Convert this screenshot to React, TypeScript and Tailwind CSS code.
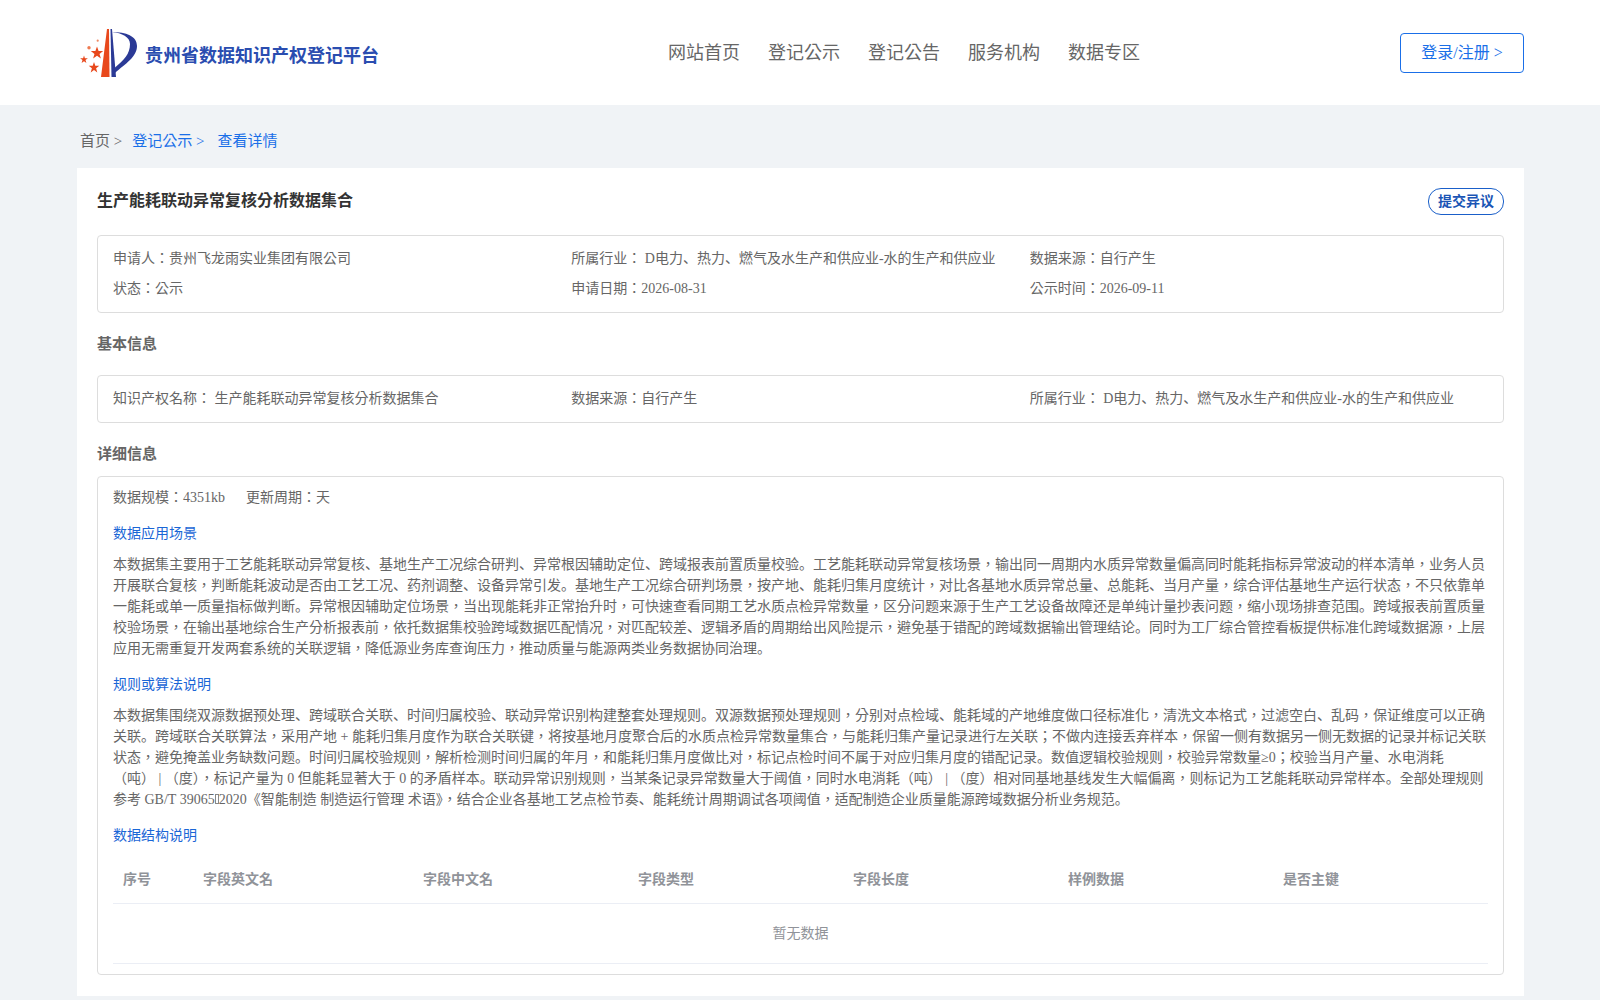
const navItems = ["网站首页", "登记公示", "登记公告", "服务机构", "数据专区"];

const summary = [
  "申请人：贵州飞龙雨实业集团有限公司",
  "所属行业： D电力、热力、燃气及水生产和供应业-水的生产和供应业",
  "数据来源：自行产生",
  "状态：公示",
  "申请日期：2026-08-31",
  "公示时间：2026-09-11",
];

const basicInfo = [
  "知识产权名称： 生产能耗联动异常复核分析数据集合",
  "数据来源：自行产生",
  "所属行业： D电力、热力、燃气及水生产和供应业-水的生产和供应业",
];

const columns = ["序号", "字段英文名", "字段中文名", "字段类型", "字段长度", "样例数据", "是否主键"];

const scene =
  "本数据集主要用于工艺能耗联动异常复核、基地生产工况综合研判、异常根因辅助定位、跨域报表前置质量校验。工艺能耗联动异常复核场景，输出同一周期内水质异常数量偏高同时能耗指标异常波动的样本清单，业务人员开展联合复核，判断能耗波动是否由工艺工况、药剂调整、设备异常引发。基地生产工况综合研判场景，按产地、能耗归集月度统计，对比各基地水质异常总量、总能耗、当月产量，综合评估基地生产运行状态，不只依靠单一能耗或单一质量指标做判断。异常根因辅助定位场景，当出现能耗非正常抬升时，可快速查看同期工艺水质点检异常数量，区分问题来源于生产工艺设备故障还是单纯计量抄表问题，缩小现场排查范围。跨域报表前置质量校验场景，在输出基地综合生产分析报表前，依托数据集校验跨域数据匹配情况，对匹配较差、逻辑矛盾的周期给出风险提示，避免基于错配的跨域数据输出管理结论。同时为工厂综合管控看板提供标准化跨域数据源，上层应用无需重复开发两套系统的关联逻辑，降低源业务库查询压力，推动质量与能源两类业务数据协同治理。";

const rulesHead =
  "本数据集围绕双源数据预处理、跨域联合关联、时间归属校验、联动异常识别构建整套处理规则。双源数据预处理规则，分别对点检域、能耗域的产地维度做口径标准化，清洗文本格式，过滤空白、乱码，保证维度可以正确关联。跨域联合关联算法，采用产地 + 能耗归集月度作为联合关联键，将按基地月度聚合后的水质点检异常数量集合，与能耗归集产量记录进行左关联；不做内连接丢弃样本，保留一侧有数据另一侧无数据的记录并标记关联状态，避免掩盖业务缺数问题。时间归属校验规则，解析检测时间归属的年月，和能耗归集月度做比对，标记点检时间不属于对应归集月度的错配记录。数值逻辑校验规则，校验异常数量≥0；校验当月产量、水电消耗（吨）\u00A0|\u00A0（度），标记产量为 0 但能耗显著大于 0 的矛盾样本。联动异常识别规则，当某条记录异常数量大于阈值，同时水电消耗（吨）\u00A0|\u00A0（度）相对同基地基线发生大幅偏离，则标记为工艺能耗联动异常样本。全部处理规则参考 GB/T 39065";

const rulesTail =
  "2020《智能制造 制造运行管理 术语》，结合企业各基地工艺点检节奏、能耗统计周期调试各项阈值，适配制造企业质量能源跨域数据分析业务规范。";

// 、。 sit in the lower left of the cell in the reference, the rest of the punctuation is centred
const Punct = ({ text }: { text: string }) => (
  <>
    {text.split(/([、。])/).map((part, i) =>
      i % 2 === 1 ? (
        <span key={i} className="font-['Liberation_Serif','Noto_Sans_CJK_SC',serif]">
          {part}
        </span>
      ) : (
        part
      ),
    )}
  </>
);

const Logo = () => (
  <svg width="60" height="54" viewBox="0 0 60 54" className="shrink-0">
    <polygon points="27,3 29,3 29.5,51 21,51" fill="#e8481c" />
    <polygon points="30.5,3 32,3 36,51 31.5,51" fill="#2b3a96" />
    <path d="M32 6C46 6 57 10 57 20C57 31 45 38 35 47L34.5 42C44 34 50 28 50 18C50 11 42 7 32 6Z" fill="#2b3a96" />
    <polygon
      points="17,20.5 18.6,25 23.2,25 19.5,27.9 20.9,32.6 17,29.8 13.1,32.6 14.5,27.9 10.8,25 15.4,25"
      fill="#e8481c"
    />
    <polygon
      points="14,36 15.3,39.8 19.3,39.8 16.1,42.3 17.3,46.4 14,43.9 10.7,46.4 11.9,42.3 8.7,39.8 12.7,39.8"
      fill="#e8481c"
    />
    <polygon
      points="4,29.5 4.9,32.3 7.9,32.3 5.5,34.1 6.4,37 4,35.2 1.6,37 2.5,34.1 0.1,32.3 3.1,32.3"
      fill="#e8481c"
    />
    <circle cx="9" cy="21.7" r="1.7" fill="#ee7a50" />
    <circle cx="17.7" cy="14.7" r="1.1" fill="#ee8a66" />
  </svg>
);

const SectionTitle = ({ children }: { children: string }) => (
  <h3 className="mt-[15px] text-sm leading-[21px] text-[#1a66d6]">{children}</h3>
);

const App = () => {
  return (
    <div className="min-h-screen bg-[#f0f3f6] font-['Liberation_Serif','Noto_Sans_CJK_TC',serif] text-sm text-[#666]">
      <header className="flex h-[105px] items-center bg-white pl-[80px] pr-[76px]">
        <div className="flex items-center gap-[5px]">
          <Logo />
          <span className="mt-[6px] text-lg font-bold text-[#2a4db0]">贵州省数据知识产权登记平台</span>
        </div>
        <nav className="ml-[289px] flex gap-[28px] text-lg text-[#666]">
          {navItems.map((item) => (
            <a key={item}>{item}</a>
          ))}
        </nav>
        <button className="ml-auto h-10 w-[124px] rounded border border-[#1a6fe8] pt-px text-base text-[#1a6fe8]">
          登录/注册 &gt;
        </button>
      </header>

      <div className="flex h-[63px] items-center pl-[80px] pt-[11px] text-[15px]">
        <span className="mr-[10px]">首页 &gt;</span>
        <span className="mr-[13px] text-[#1a6fe8]">登记公示 &gt;</span>
        <span className="text-[#1a6fe8]">查看详情</span>
      </div>

      <main className="ml-[77px] w-[1447px] bg-white px-5 pb-[21px] pt-5">
        <div className="flex h-[27px] items-start justify-between">
          <h1 className="text-base font-bold leading-[26px] text-[#333]">生产能耗联动异常复核分析数据集合</h1>
          <button className="h-[27px] w-[76px] rounded-[13px] border border-[#1a5fc9] text-sm font-bold text-[#1a55b5]">
            提交异议
          </button>
        </div>

        <div className="mt-5 grid grid-cols-3 rounded border border-[#ddd] px-[15px] pb-[8px] pt-[8px]">
          {summary.map((item) => (
            <div key={item} className="leading-[30px]">
              <Punct text={item} />
            </div>
          ))}
        </div>

        <h2 className="mt-[21px] text-[15px] font-bold leading-5">基本信息</h2>
        <div className="mt-[21px] grid h-12 grid-cols-3 items-center rounded border border-[#ddd] px-[15px]">
          {basicInfo.map((item) => (
            <div key={item}>
              <Punct text={item} />
            </div>
          ))}
        </div>

        <h2 className="mt-[21px] text-[15px] font-bold leading-5">详细信息</h2>
        <div className="mt-3 rounded border border-[#ddd] px-[15px] pb-[10px] pt-[10px]">
          <div className="flex gap-[21px] leading-[21px]">
            <span>数据规模：4351kb</span>
            <span>更新周期：天</span>
          </div>
          <SectionTitle>数据应用场景</SectionTitle>
          <p className="mt-[10px] leading-[21px]">
            <Punct text={scene} />
          </p>
          <SectionTitle>规则或算法说明</SectionTitle>
          <p className="mt-[10px] leading-[21px]">
            <Punct text={rulesHead} />
            <span className="inline-block h-[10px] w-[4px] border border-[#888]" />
            <Punct text={rulesTail} />
          </p>
          <SectionTitle>数据结构说明</SectionTitle>

          <div className="mt-[10px] grid h-12 grid-cols-[80px_220px_repeat(5,215px)] items-center border-b border-[#ebeef5] font-bold text-[#909399]">
            {columns.map((col) => (
              <div key={col} className="px-[10px]">
                {col}
              </div>
            ))}
          </div>
          <div className="flex h-[60px] items-center justify-center border-b border-[#ebeef5] pt-px text-[#909399]">
            暂无数据
          </div>
        </div>
      </main>
    </div>
  );
};

export default App;
